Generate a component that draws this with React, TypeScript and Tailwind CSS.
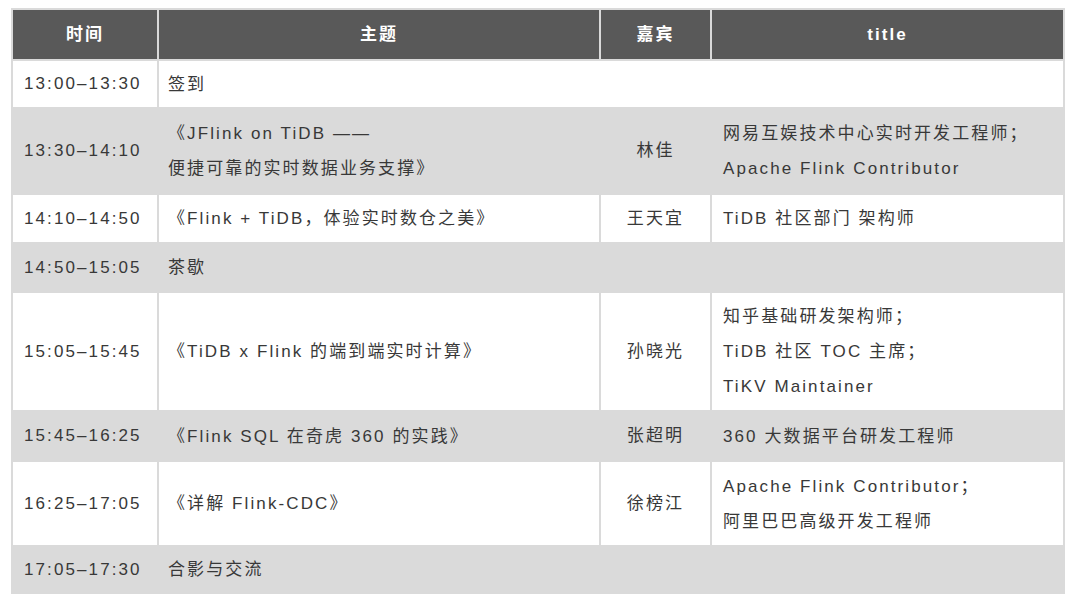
type Row = {
  time: string
  topic: string[]
  speaker?: string
  title?: string[]
  gray?: boolean
  span?: boolean
  h: string
}

const rows: Row[] = [
  { time: "13:00–13:30", topic: ["签到"], span: true, h: "h-[48px]" },
  {
    time: "13:30–14:10",
    topic: ["《JFlink on TiDB ——", "便捷可靠的实时数据业务支撑》"],
    speaker: "林佳",
    title: ["网易互娱技术中心实时开发工程师；", "Apache Flink Contributor"],
    gray: true,
    h: "h-[86px]",
  },
  {
    time: "14:10–14:50",
    topic: ["《Flink + TiDB，体验实时数仓之美》"],
    speaker: "王天宜",
    title: ["TiDB 社区部门 架构师"],
    h: "h-[49px]",
  },
  { time: "14:50–15:05", topic: ["茶歇"], span: true, gray: true, h: "h-[49px]" },
  {
    time: "15:05–15:45",
    topic: ["《TiDB x Flink 的端到端实时计算》"],
    speaker: "孙晓光",
    title: ["知乎基础研发架构师；", "TiDB 社区 TOC 主席；", "TiKV Maintainer"],
    h: "h-[119px]",
  },
  {
    time: "15:45–16:25",
    topic: ["《Flink SQL 在奇虎 360 的实践》"],
    speaker: "张超明",
    title: ["360 大数据平台研发工程师"],
    gray: true,
    h: "h-[50px]",
  },
  {
    time: "16:25–17:05",
    topic: ["《详解 Flink-CDC》"],
    speaker: "徐榜江",
    title: ["Apache Flink Contributor；", "阿里巴巴高级开发工程师"],
    h: "h-[85px]",
  },
  { time: "17:05–17:30", topic: ["合影与交流"], span: true, gray: true, h: "h-[47px]" },
]

const cell = "border-2 border-[#dadada] align-middle"

export default function App() {
  return (
    <div
      className="w-[1080px] h-[605px] bg-white pt-[8px] pl-[11px] text-[17px] tracking-[2.1px] text-[#383838]"
      style={{ fontFamily: '"Liberation Sans", "Noto Sans CJK SC", sans-serif' }}
    >
      <table className="w-[1052px] table-fixed border-collapse">
        <colgroup>
          <col className="w-[146px]" />
          <col className="w-[442px]" />
          <col className="w-[111px]" />
          <col className="w-[353px]" />
        </colgroup>
        <thead>
          <tr className="bg-[#595959] text-white">
            <th className={`${cell} h-[51px] font-semibold`}>时间</th>
            <th className={`${cell} font-semibold`}>主题</th>
            <th className={`${cell} font-semibold`}>嘉宾</th>
            <th className={`${cell} font-semibold`}>title</th>
          </tr>
        </thead>
        <tbody>
          {rows.map((r) => (
            <tr key={r.time} className={r.gray ? "bg-[#dadada]" : "bg-white"}>
              <td className={`${cell} ${r.h} pl-[11px]`}>{r.time}</td>
              <td className={`${cell} pl-[9px] leading-[35px]`} colSpan={r.span ? 3 : 1}>
                {r.topic.map((t) => (
                  <div key={t}>{t}</div>
                ))}
              </td>
              {!r.span && (
                <>
                  <td className={`${cell} text-center`}>{r.speaker}</td>
                  <td className={`${cell} pl-[11px] leading-[35px]`}>
                    {r.title?.map((t) => (
                      <div key={t}>{t}</div>
                    ))}
                  </td>
                </>
              )}
            </tr>
          ))}
        </tbody>
      </table>
    </div>
  )
}
